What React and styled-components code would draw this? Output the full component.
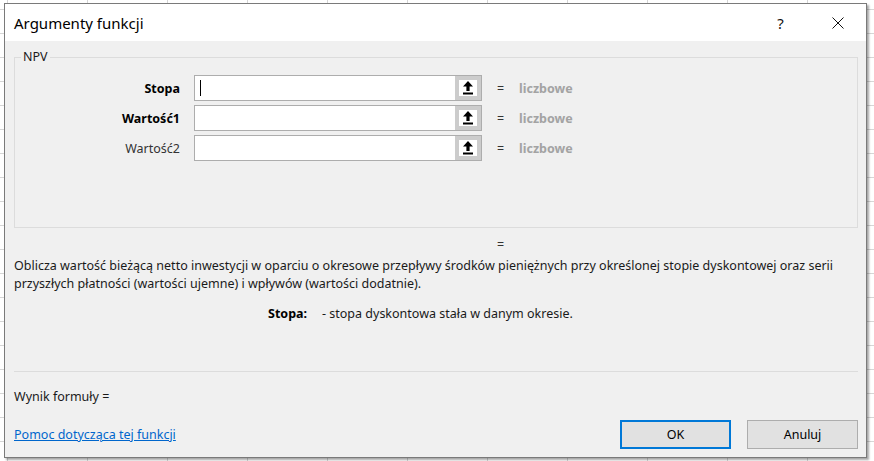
import styled, { createGlobalStyle } from "styled-components";

const GlobalStyle = createGlobalStyle`
  html, body {
    margin: 0;
    padding: 0;
  }
  body {
    width: 874px;
    height: 461px;
    overflow: hidden;
    background-color: #ffffff;
    background-image:
      linear-gradient(to right, #d6d6d6 1px, transparent 1px),
      linear-gradient(to bottom, #d6d6d6 1px, transparent 1px);
    background-size: 80px 24px;
    background-position: 7px 9px;
    font-family: "Noto Sans", "Open Sans", sans-serif;
    font-size: 12.5px;
    color: #000;
  }
`;

const Page = styled.div`
  padding: 3px 0 0 4px;
`;

const Dialog = styled.div`
  box-sizing: border-box;
  width: 863px;
  height: 455px;
  border: 1px solid #7a7a7a;
  background: #f0f0f0;
  box-shadow: 2px 2px 2px rgba(0, 0, 0, 0.35);
  display: flex;
  flex-direction: column;
`;

const TitleBar = styled.div`
  height: 37px;
  background: #ffffff;
  display: flex;
  align-items: center;
  padding-left: 9px;
`;

const Title = styled.div`
  flex: 1;
  font-size: 15px;
  color: #000;
`;

const TitleButton = styled.div`
  width: 57px;
  height: 100%;
  display: flex;
  align-items: center;
  justify-content: center;
  font-size: 15px;
  color: #111;
`;

const Body = styled.div`
  flex: 1;
  display: flex;
  flex-direction: column;
  padding: 0 8px 0 9px;
`;

const Group = styled.div`
  position: relative;
  box-sizing: border-box;
  margin-top: 16px;
  height: 171px;
  border: 1px solid #dcdcdc;
  padding-top: 17px;
  display: flex;
  flex-direction: column;
  gap: 4px;
`;

const Legend = styled.span`
  position: absolute;
  top: -9px;
  left: 6px;
  padding: 0 2px;
  background: #f0f0f0;
  font-size: 12.5px;
  line-height: 16px;
  color: #1a1a1a;
`;

const Row = styled.div`
  display: flex;
  align-items: center;
  height: 26px;
`;

const Label = styled.div`
  width: 165px;
  margin-right: 14px;
  text-align: right;
  font-weight: ${(p) => (p.$bold ? 700 : 400)};
  color: ${(p) => (p.$bold ? "#000" : "#333")};
`;

const InputBox = styled.div`
  box-sizing: border-box;
  width: 288px;
  height: 26px;
  border: 1px solid #adadad;
  background: #fff;
  display: flex;
`;

const Field = styled.div`
  flex: 1;
  display: flex;
  align-items: center;
  padding-left: 5px;
`;

const Caret = styled.span`
  width: 1px;
  height: 16px;
  background: #000;
`;

const RefButton = styled.div`
  box-sizing: border-box;
  width: 26px;
  height: 100%;
  background: #fff;
  border: 4px solid #cccccc;
  display: flex;
  align-items: center;
  justify-content: center;
`;

const Equals = styled.span`
  margin-left: 15px;
  width: 22px;
  color: #333;
`;

const TypeHint = styled.span`
  font-weight: 700;
  color: #a3a3a3;
`;

const ResultLine = styled.div`
  margin-top: 8px;
  padding-left: 483px;
  line-height: 18px;
  color: #333;
`;

const Description = styled.div`
  margin-top: 3px;
  line-height: 18px;
  color: #1a1a1a;
`;

const ArgHelp = styled.div`
  margin-top: 12px;
  padding-left: 254px;
  display: flex;
  gap: 15px;
  line-height: 18px;
  color: #1a1a1a;
`;

const ArgName = styled.span`
  font-weight: 700;
  color: #000;
`;

const Separator = styled.div`
  margin-top: 48px;
  height: 1px;
  background: #dcdcdc;
`;

const FormulaResult = styled.div`
  margin-top: 16px;
  line-height: 18px;
  color: #1a1a1a;
`;

const Footer = styled.div`
  margin-top: 14px;
  display: flex;
  align-items: center;
`;

const HelpLink = styled.a`
  flex: 1;
  color: #0066cc;
  text-decoration: underline;
  cursor: pointer;
`;

const Button = styled.button`
  box-sizing: border-box;
  width: 111px;
  height: 29px;
  margin-left: ${(p) => (p.$gap ? "16px" : "0")};
  background: #e1e1e1;
  border: ${(p) => (p.$primary ? "2px solid #0078d7" : "1px solid #adadad")};
  font-family: inherit;
  font-size: 12.5px;
  color: #000;
  padding: 0;
`;

function UploadIcon() {
  return (
    <svg width="12" height="14" viewBox="0 0 12 14">
      <path d="M6 0 L11 5.5 L7.6 5.5 L7.6 10 L4.4 10 L4.4 5.5 L1 5.5 Z" fill="#000" />
      <rect x="1" y="11.5" width="10" height="2" fill="#000" />
    </svg>
  );
}

function CloseIcon() {
  return (
    <svg width="12" height="12" viewBox="0 0 12 12">
      <path d="M0.5 0.5 L11.5 11.5 M11.5 0.5 L0.5 11.5" stroke="#111" strokeWidth="1" />
    </svg>
  );
}

const args = [
  { name: "Stopa", bold: true, focused: true },
  { name: "Wartość1", bold: true },
  { name: "Wartość2", bold: false },
];

export default function App() {
  return (
    <>
      <GlobalStyle />
      <Page>
        <Dialog>
          <TitleBar>
            <Title>Argumenty funkcji</Title>
            <TitleButton>?</TitleButton>
            <TitleButton>
              <CloseIcon />
            </TitleButton>
          </TitleBar>
          <Body>
            <Group>
              <Legend>NPV</Legend>
              {args.map((a) => (
                <Row key={a.name}>
                  <Label $bold={a.bold}>{a.name}</Label>
                  <InputBox>
                    <Field>{a.focused && <Caret />}</Field>
                    <RefButton>
                      <UploadIcon />
                    </RefButton>
                  </InputBox>
                  <Equals>=</Equals>
                  <TypeHint>liczbowe</TypeHint>
                </Row>
              ))}
            </Group>
            <ResultLine>=</ResultLine>
            <Description>
              Oblicza wartość bieżącą netto inwestycji w oparciu o okresowe przepływy środków pieniężnych przy określonej stopie dyskontowej oraz serii
              <br />
              przyszłych płatności (wartości ujemne) i wpływów (wartości dodatnie).
            </Description>
            <ArgHelp>
              <ArgName>Stopa:</ArgName>
              <span>- stopa dyskontowa stała w danym okresie.</span>
            </ArgHelp>
            <Separator />
            <FormulaResult>Wynik formuły =</FormulaResult>
            <Footer>
              <HelpLink>Pomoc dotycząca tej funkcji</HelpLink>
              <Button $primary>OK</Button>
              <Button $gap>Anuluj</Button>
            </Footer>
          </Body>
        </Dialog>
      </Page>
    </>
  );
}
